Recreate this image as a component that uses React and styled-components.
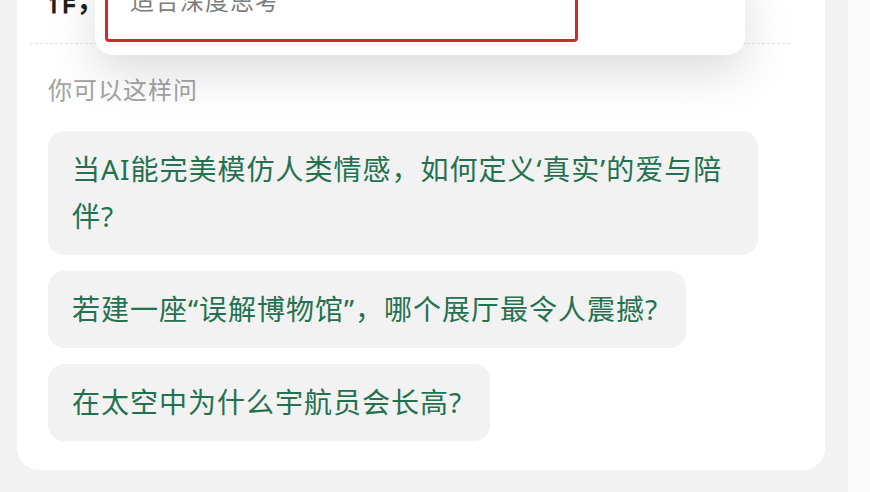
import React from "react";
import styled, { createGlobalStyle } from "styled-components";

const GlobalStyle = createGlobalStyle`
  html, body {
    margin: 0;
    padding: 0;
    height: 492px;
    overflow: hidden;
    background: #f2f2f2;
    font-family: "Noto Sans", "Noto Sans CJK SC", sans-serif;
  }
`;

const questions = [
  "当AI能完美模仿人类情感，如何定义‘真实’的爱与陪伴?",
  "若建一座“误解博物馆”，哪个展厅最令人震撼?",
  "在太空中为什么宇航员会长高?",
];

const App = () => {
  return (
    <>
      <GlobalStyle />
      <Page>
        <Main>
          <Card>
            <HeaderRow>
              <Lead>作，</Lead>
            </HeaderRow>
            <Label>你可以这样问</Label>
            <Chips>
              {questions.map((q) => (
                <Chip key={q}>{q}</Chip>
              ))}
            </Chips>
          </Card>
          <Popup>
            <Option>
              <OptionText>适合深度思考</OptionText>
            </Option>
          </Popup>
        </Main>
        <Strip />
      </Page>
    </>
  );
};

const Page = styled.div`
  display: flex;
  height: 492px;
`;

const Main = styled.div`
  position: relative;
  flex: 1;
  padding: 0 23px 0 17px;
  background: #f2f2f2;
`;

const Strip = styled.div`
  width: 22px;
  background: #fafafa;
`;

const Card = styled.div`
  margin-top: -40px;
  height: 510px;
  box-sizing: border-box;
  background: #ffffff;
  border-radius: 0 0 22px 22px;
  padding-bottom: 30px;
`;

const HeaderRow = styled.div`
  height: 84px;
  box-sizing: border-box;
  margin: 0 35px 0 13px;
  padding: 20px 0 0 18px;
  border-bottom: 1px dashed #e2e2e2;
`;

const Lead = styled.div`
  font-size: 28px;
  line-height: 40px;
  font-weight: 700;
  color: #1f1f1f;
`;

const Label = styled.div`
  margin: 30px 0 0 31px;
  font-size: 24px;
  line-height: 32px;
  letter-spacing: 1px;
  color: #a3a3a3;
`;

const Chips = styled.div`
  display: flex;
  flex-direction: column;
  align-items: flex-start;
  gap: 16px;
  margin: 25px 0 0 31px;
`;

const Chip = styled.div`
  max-width: 710px;
  box-sizing: border-box;
  padding: 15px 28px 15px 24px;
  background: #f2f2f2;
  border-radius: 16px;
  font-size: 28px;
  line-height: 47px;
  letter-spacing: 1px;
  color: #24714f;
`;

const Popup = styled.div`
  position: absolute;
  top: -30px;
  left: 95px;
  width: 650px;
  height: 85px;
  box-sizing: border-box;
  display: flex;
  align-items: flex-end;
  padding: 0 0 13px 10px;
  background: #ffffff;
  border-radius: 0 0 18px 18px;
  box-shadow: 0 18px 48px rgba(0, 0, 0, 0.14);
`;

const Option = styled.div`
  width: 473px;
  height: 72px;
  box-sizing: border-box;
  padding: 12px 0 0 22px;
  border: 3px solid #cf2b2b;
  border-radius: 4px;
  background: #ffffff;
`;

const OptionText = styled.div`
  font-size: 24px;
  line-height: 32px;
  letter-spacing: 1px;
  color: #7d7d7d;
`;

export default App;
